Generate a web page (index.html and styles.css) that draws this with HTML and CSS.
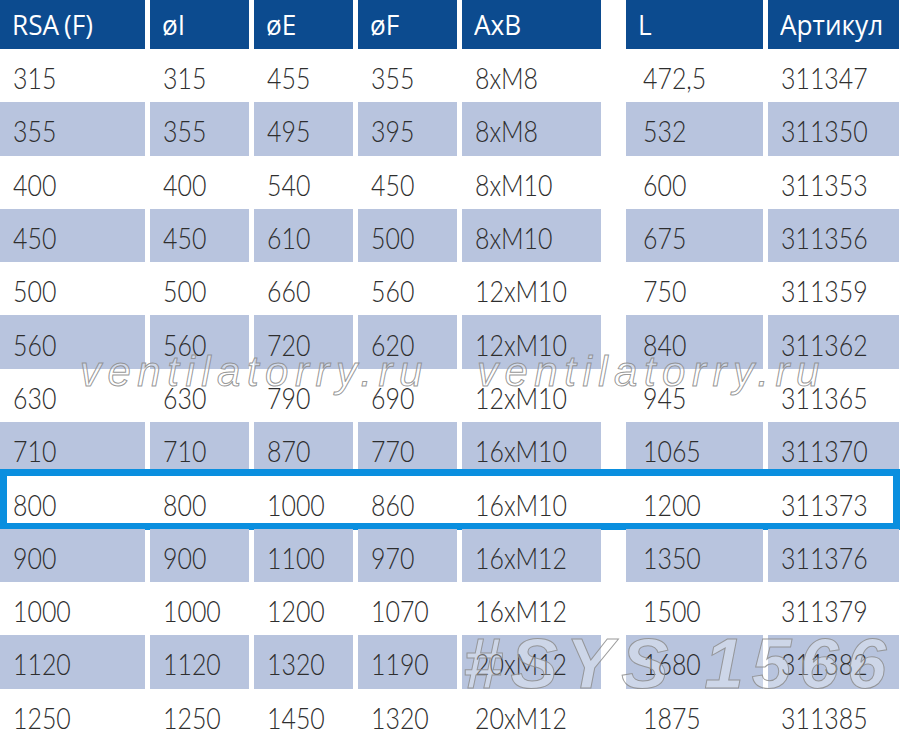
FILE: index.html
```html
<!DOCTYPE html>
<html lang="ru">
<head>
<meta charset="utf-8">
<title>RSA (F)</title>
<link rel="stylesheet" href="styles.css">
</head>
<body>
<div class="page">
  <div class="table">
    <div class="row head">
      <div class="cell"><span class="t rsa">RSA (F)</span></div><div class="cell"><span class="t">øI</span></div><div class="cell"><span class="t">øE</span></div><div class="cell"><span class="t">øF</span></div><div class="cell"><span class="t">AxB</span></div><div class="cell c6"><span class="t">L</span></div><div class="cell"><span class="t">Артикул</span></div>
    </div>
    <div class="row"><div class="cell"><span class="t">315</span></div><div class="cell"><span class="t">315</span></div><div class="cell"><span class="t">455</span></div><div class="cell"><span class="t">355</span></div><div class="cell"><span class="t">8xM8</span></div><div class="cell c6"><span class="t">472,5</span></div><div class="cell"><span class="t">311347</span></div></div>
    <div class="row alt"><div class="cell"><span class="t">355</span></div><div class="cell"><span class="t">355</span></div><div class="cell"><span class="t">495</span></div><div class="cell"><span class="t">395</span></div><div class="cell"><span class="t">8xM8</span></div><div class="cell c6"><span class="t">532</span></div><div class="cell"><span class="t">311350</span></div></div>
    <div class="row"><div class="cell"><span class="t">400</span></div><div class="cell"><span class="t">400</span></div><div class="cell"><span class="t">540</span></div><div class="cell"><span class="t">450</span></div><div class="cell"><span class="t">8xM10</span></div><div class="cell c6"><span class="t">600</span></div><div class="cell"><span class="t">311353</span></div></div>
    <div class="row alt"><div class="cell"><span class="t">450</span></div><div class="cell"><span class="t">450</span></div><div class="cell"><span class="t">610</span></div><div class="cell"><span class="t">500</span></div><div class="cell"><span class="t">8xM10</span></div><div class="cell c6"><span class="t">675</span></div><div class="cell"><span class="t">311356</span></div></div>
    <div class="row"><div class="cell"><span class="t">500</span></div><div class="cell"><span class="t">500</span></div><div class="cell"><span class="t">660</span></div><div class="cell"><span class="t">560</span></div><div class="cell"><span class="t">12xM10</span></div><div class="cell c6"><span class="t">750</span></div><div class="cell"><span class="t">311359</span></div></div>
    <div class="row alt"><div class="cell"><span class="t">560</span></div><div class="cell"><span class="t">560</span></div><div class="cell"><span class="t">720</span></div><div class="cell"><span class="t">620</span></div><div class="cell"><span class="t">12xM10</span></div><div class="cell c6"><span class="t">840</span></div><div class="cell"><span class="t">311362</span></div></div>
    <div class="row"><div class="cell"><span class="t">630</span></div><div class="cell"><span class="t">630</span></div><div class="cell"><span class="t">790</span></div><div class="cell"><span class="t">690</span></div><div class="cell"><span class="t">12xM10</span></div><div class="cell c6"><span class="t">945</span></div><div class="cell"><span class="t">311365</span></div></div>
    <div class="row alt"><div class="cell"><span class="t">710</span></div><div class="cell"><span class="t">710</span></div><div class="cell"><span class="t">870</span></div><div class="cell"><span class="t">770</span></div><div class="cell"><span class="t">16xM10</span></div><div class="cell c6"><span class="t">1065</span></div><div class="cell"><span class="t">311370</span></div></div>
    <div class="row selected"><div class="cell"><span class="t">800</span></div><div class="cell"><span class="t">800</span></div><div class="cell"><span class="t">1000</span></div><div class="cell"><span class="t">860</span></div><div class="cell"><span class="t">16xM10</span></div><div class="cell c6"><span class="t">1200</span></div><div class="cell"><span class="t">311373</span></div></div>
    <div class="row alt"><div class="cell"><span class="t">900</span></div><div class="cell"><span class="t">900</span></div><div class="cell"><span class="t">1100</span></div><div class="cell"><span class="t">970</span></div><div class="cell"><span class="t">16xM12</span></div><div class="cell c6"><span class="t">1350</span></div><div class="cell"><span class="t">311376</span></div></div>
    <div class="row"><div class="cell"><span class="t">1000</span></div><div class="cell"><span class="t">1000</span></div><div class="cell"><span class="t">1200</span></div><div class="cell"><span class="t">1070</span></div><div class="cell"><span class="t">16xM12</span></div><div class="cell c6"><span class="t">1500</span></div><div class="cell"><span class="t">311379</span></div></div>
    <div class="row alt"><div class="cell"><span class="t">1120</span></div><div class="cell"><span class="t">1120</span></div><div class="cell"><span class="t">1320</span></div><div class="cell"><span class="t">1190</span></div><div class="cell"><span class="t">20xM12</span></div><div class="cell c6"><span class="t">1680</span></div><div class="cell"><span class="t">311382</span></div></div>
    <div class="row"><div class="cell"><span class="t">1250</span></div><div class="cell"><span class="t">1250</span></div><div class="cell"><span class="t">1450</span></div><div class="cell"><span class="t">1320</span></div><div class="cell"><span class="t">20xM12</span></div><div class="cell c6"><span class="t">1875</span></div><div class="cell"><span class="t">311385</span></div></div>
  </div>
  <div class="wm wm1">ventilatorry.ru</div>
  <div class="wm wm2">ventilatorry.ru</div>
  <div class="sys">#SYS 1566</div>
</div>
</body>
</html>
```

FILE: styles.css
```css
html, body {
  margin: 0;
  padding: 0;
  background: #ffffff;
}
.page {
  position: relative;
  width: 900px;
  height: 743px;
  overflow: hidden;
}
.table {
  display: flex;
  flex-direction: column;
}
.row {
  position: relative;
  display: grid;
  grid-template-columns: 145px 99px 99px 99px 139px 157px 131px;
  column-gap: 5px;
  height: 53.3px;
}
.row.head {
  height: 49px;
}
.cell {
  display: flex;
  align-items: center;
  padding: 3px 0 0 13px;
  font-family: Lato, "Open Sans", sans-serif;
  font-weight: 300;
  font-size: 30px;
  color: #2e2e2e;
  white-space: nowrap;
}
.t {
  display: inline-block;
  transform: scaleX(0.83);
  transform-origin: left center;
}
.cell.c6 {
  margin-left: 20px;
  padding-left: 17px;
}
.head .cell {
  background: #0c4b8f;
  color: #ffffff;
  font-family: "Open Sans", "Noto Sans", sans-serif;
  font-weight: 400;
  font-size: 27px;
  padding: 0 0 0 12px;
}
.head .t {
  transform: scaleX(0.97);
}
.head .rsa {
  word-spacing: -2px;
}
.alt .cell {
  background: #b8c4de;
}
.selected::after {
  content: "";
  position: absolute;
  left: 0;
  right: 0;
  top: -6px;
  bottom: -1px;
  border: 7px solid #0a8fdf;
  pointer-events: none;
}
.wm {
  position: absolute;
  top: 351px;
  font-family: "Liberation Sans", Arial, sans-serif;
  font-style: italic;
  font-size: 42px;
  line-height: 42px;
  letter-spacing: 6.5px;
  color: rgba(255, 255, 255, 0.35);
  -webkit-text-stroke: 1px rgba(140, 140, 140, 0.9);
  white-space: nowrap;
}
.wm1 { left: 80px; }
.wm2 { left: 477px; }
.sys {
  position: absolute;
  left: 463px;
  top: 628px;
  font-family: "Liberation Sans", Arial, sans-serif;
  font-style: italic;
  font-weight: 700;
  font-size: 71px;
  line-height: 71px;
  letter-spacing: 8px;
  color: rgba(255, 255, 255, 0.3);
  -webkit-text-stroke: 1px rgba(140, 140, 140, 0.85);
  white-space: nowrap;
}
```
